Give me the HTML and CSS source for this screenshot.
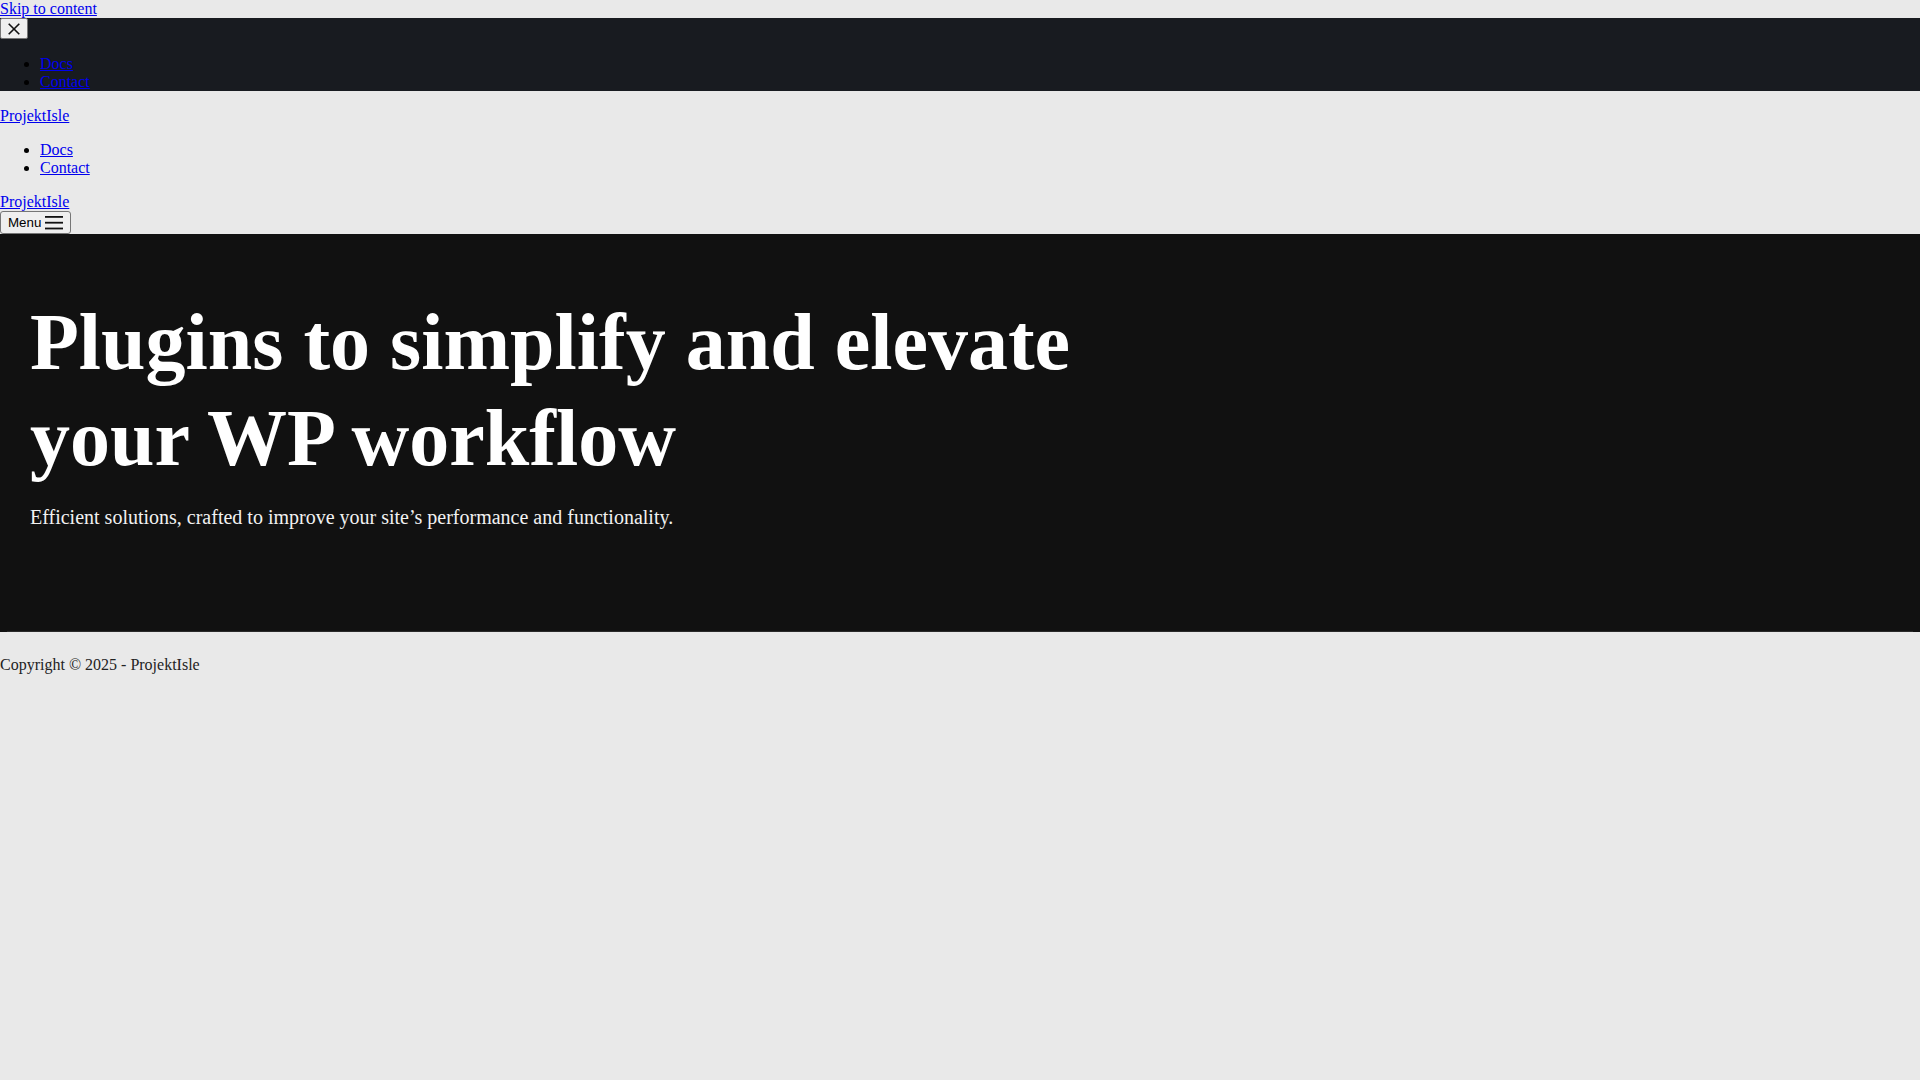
FILE: index.html
```html
<!DOCTYPE html>
<html lang="en">
<head>
<meta charset="utf-8">
<title>ProjektIsle</title>
<link rel="stylesheet" href="styles.css">
</head>
<body>
<a class="skip-link" href="#content">Skip to content</a>
<div class="drawer">
  <button class="close-btn" aria-label="Close">
    <svg class="close-icon" width="12" height="12" viewBox="0 0 12 12" aria-hidden="true"><path d="M0.7 0.7 L11.3 11.3 M11.3 0.7 L0.7 11.3" stroke="#111" stroke-width="1.6" fill="none"/></svg>
  </button>
  <ul class="nav-list">
    <li><a href="#">Docs</a></li>
    <li><a href="#">Contact</a></li>
  </ul>
</div>
<p class="brand"><a href="#">ProjektIsle</a></p>
<ul class="nav-list">
  <li><a href="#">Docs</a></li>
  <li><a href="#">Contact</a></li>
</ul>
<div class="brand brand-tight"><a href="#">ProjektIsle</a></div>
<button class="menu-btn"><span class="menu-label">Menu</span><svg class="menu-icon" width="18" height="14" viewBox="0 0 18 14" aria-hidden="true"><rect x="0" y="0" width="18" height="1.8" fill="#111"/><rect x="0" y="5.8" width="18" height="1.8" fill="#111"/><rect x="0" y="11.6" width="18" height="1.8" fill="#111"/></svg></button>
<section class="hero" id="content">
  <div class="hero-inner">
    <h1 class="hero-title">Plugins to simplify and elevate your WP workflow</h1>
    <p class="hero-sub">Efficient solutions, crafted to improve your site’s performance and functionality.</p>
  </div>
</section>
<footer class="site-footer">
  <div class="copyright">Copyright © 2025 - ProjektIsle</div>
</footer>
</body>
</html>
```
FILE: styles.css
```css
html, body {
  margin: 0;
  padding: 0;
}
body {
  background: #e9e9e9;
  color: #000;
  font-family: "Liberation Serif", "Times New Roman", serif;
  font-size: 16px;
}
a {
  color: #0000ee;
}
.drawer {
  background: #181b20;
}
.close-btn {
  box-sizing: border-box;
  width: 28px;
  height: 21px;
  margin: 0;
  padding: 0;
  border: 1px solid #767676;
  border-radius: 2px;
  background: #efefef;
  display: flex;
  align-items: center;
  justify-content: center;
}
.close-icon {
  display: block;
}
.nav-list {
  margin: 16px 0;
  padding-left: 40px;
}
.brand {
  margin: 16px 0;
}
.brand-tight {
  margin-bottom: 0;
}
.menu-btn {
  display: flex;
  align-items: center;
  gap: 4px;
  box-sizing: border-box;
  height: 23px;
  margin: 0;
  padding: 0 7px;
  border: 1px solid #767676;
  border-radius: 3px;
  background: #efefef;
  color: #000;
  font-family: "Liberation Sans", Arial, sans-serif;
  font-size: 13.333px;
}
.menu-icon {
  display: block;
}
.hero {
  background: #111111;
  padding-top: 60px;
}
.hero::after {
  content: "";
  display: block;
  height: 1px;
  margin: 0 7px;
  background: #2a2a2a;
}
.hero-inner {
  padding: 0 30px 82px;
}
.hero-title {
  max-width: 1100px;
  margin: 0;
  color: #ffffff;
  font-family: "Liberation Serif", "Times New Roman", serif;
  font-weight: 700;
  font-size: 80px;
  line-height: 96px;
}
.hero-sub {
  margin: 20px 0;
  color: #f2f2f2;
  font-family: "Liberation Serif", "Times New Roman", serif;
  font-size: 20px;
}
.site-footer {
  padding-top: 24px;
}
.copyright {
  color: #222222;
  font-size: 16px;
}
```
